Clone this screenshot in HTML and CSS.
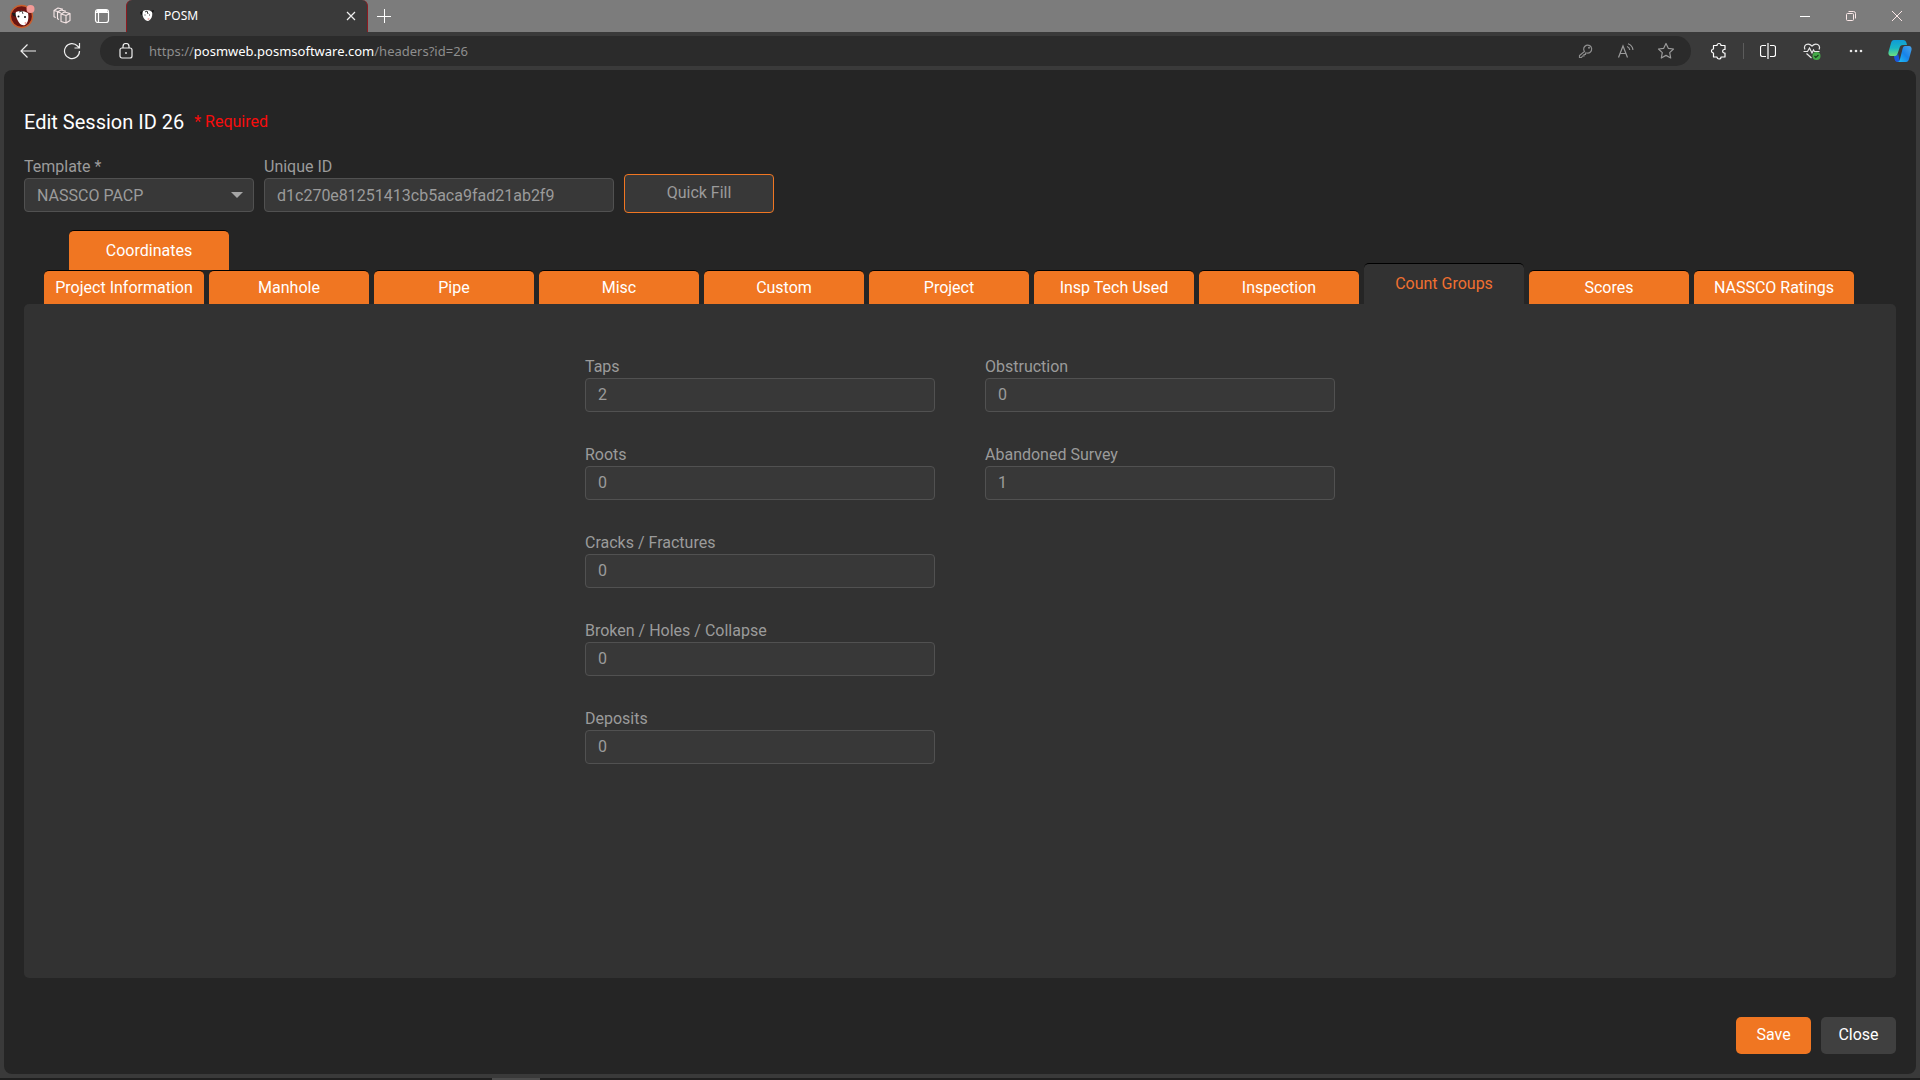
FILE: index.html
```html
<!DOCTYPE html>
<html lang="en">
<head>
<meta charset="utf-8">
<meta name="viewport" content="width=device-width, initial-scale=1">
<title>POSM</title>
<link rel="stylesheet" href="styles.css">
</head>
<body>
<div class="browser">
  <header class="titlebar">
    <button class="icon-btn" aria-label="Profile">
      <svg width="26" height="26" viewBox="0 0 26 26"><circle cx="12.500" cy="13.500" r="11" fill="#6b1512" stroke="#c9602f" stroke-width="1.300"/><path d="M3 10l5 0 1 4-5-1z" fill="#1b1b1b"/><path d="M7 9c4-2 8-1 12 1 1 5 0 10-3 12-4 1-6-2-8-6-1-3-2-5-1-7z" fill="#fff"/><circle cx="9.500" cy="13.500" r="1" fill="#111"/><circle cx="16" cy="14" r="1" fill="#111"/><path d="M10 9l3-1 1 3" stroke="#555" fill="none"/><circle cx="16.500" cy="20" r="1" fill="#f5a0a0"/><circle cx="21.500" cy="6" r="4" fill="#f39a97"/></svg>
    </button>
    <button class="icon-btn" aria-label="Workspaces">
      <svg width="18" height="18" viewBox="0 0 18 18" fill="none" stroke="#f6e6e6" stroke-width="1.100" stroke-linejoin="round"><path d="M8 7l5 1.500V16L8 14.500zM8 7l3.500-2L17 6.500 13 8.500M17 6.500v7L13 16"/><path d="M6 12.500l-1.500-.7V5L8 3l5 1.300M4.500 5L8 6M2.700 10.500L1 9.700V3.500L5 1l5 1.300M1 3.500L4.500 4.500"/></svg>
    </button>
    <button class="icon-btn" aria-label="Tab actions">
      <svg width="16" height="16" viewBox="0 0 16 16" fill="none" stroke="#fff" stroke-width="1.200"><rect x="1.500" y="1.500" width="13" height="13" rx="2.500"/><path d="M1.500 4.500h13M4.500 4.500v10"/><path d="M2.500 3h11" stroke-width="2"/></svg>
    </button>
    <div class="browser-tab">
      <svg width="16" height="14" viewBox="0 0 16 14"><path d="M1 3l3-1 1 3-3 1zM12 2l3-1-1 3z" fill="#111"/><path d="M4 2c3-2 7-1 9 1 1 4-1 8-4 9-3 0-7-5-5-10z" fill="#fff"/><path d="M6 3l2-1 1 3M5.500 6h1M10 6h1" stroke="#333" fill="none"/><circle cx="9.500" cy="10" r="1" fill="#f4b0b0"/></svg>
      <span class="browser-tab-name">POSM</span>
      <button class="tab-close" aria-label="Close tab"><svg width="10" height="10" viewBox="0 0 10 10" stroke="#eee" stroke-width="1.200"><path d="M1 1l8 8M9 1l-8 8"/></svg></button>
    </div>
    <button class="new-tab" aria-label="New tab"><svg width="14" height="14" viewBox="0 0 14 14" stroke="#fff" stroke-width="1"><path d="M0 7.500h14M7.500 0v14"/></svg></button>
    <div class="window-controls">
      <button aria-label="Minimize"><svg width="10" height="10" viewBox="0 0 10 10" stroke="#fff"><path d="M0 5.500h10"/></svg></button>
      <button aria-label="Restore"><svg width="10" height="10" viewBox="0 0 10 10" fill="none" stroke="#fbe8e8"><rect x=".5" y="2.500" width="7" height="7" rx="1"/><path d="M2.500.5h5a2 2 0 0 1 2 2v5"/></svg></button>
      <button aria-label="Close window"><svg width="10" height="10" viewBox="0 0 10 10" stroke="#fbe8e8"><path d="M0 0l10 10M10 0L0 10"/></svg></button>
    </div>
  </header>

  <div class="toolbar">
    <button class="icon-btn" aria-label="Back"><svg width="16" height="14" viewBox="0 0 16 14" fill="none" stroke="#eee" stroke-width="1.200"><path d="M16 7H1M7.500.5L1 7l6.500 6.500"/></svg></button>
    <button class="icon-btn" aria-label="Refresh"><svg width="18" height="18" viewBox="0 0 18 18" fill="none" stroke="#eee" stroke-width="1.200"><path d="M16.500 9A7.500 7.500 0 1 1 14.500 4l1.500 1.500M16.500 1v5h-5"/></svg></button>
    <div class="address">
      <svg class="lock" width="14" height="16" viewBox="0 0 14 16" fill="none" stroke="#eee" stroke-width="1.200"><rect x="1" y="5" width="12" height="10" rx="2"/><path d="M4 5V3.500a3 3 0 0 1 6 0V5"/><circle cx="7" cy="10" r=".9" fill="#eee" stroke="none"/></svg>
      <a class="url" href="#">https://<span class="host">posmweb.posmsoftware.com</span>/headers?id=26</a>
      <button class="icon-btn dim" aria-label="Saved passwords"><svg width="16" height="16" viewBox="0 0 16 16" fill="none" stroke="#8e8e8e" stroke-width="1.200"><path d="M6.500 8.500A4 4 0 1 1 9 10H7.500v1.500H6V13H4.500l-1 1.500H1.500v-2z"/><circle cx="11" cy="4.700" r="1" fill="#8e8e8e" stroke="none"/></svg></button>
      <button class="icon-btn dim" aria-label="Read aloud"><svg width="18" height="16" viewBox="0 0 18 16" fill="none" stroke="#9a9a9a" stroke-width="1.200"><path d="M1.500 14.500L6 3l4.500 11.500M3 10.500h6M10 3.500c1.500.5 2.500 1.700 2.800 3.500M11 .8c2.600.9 4.500 3 5 6"/></svg></button>
      <button class="icon-btn dim" aria-label="Add to favorites"><svg width="18" height="18" viewBox="0 0 18 18" fill="none" stroke="#9a9a9a" stroke-width="1.200" stroke-linejoin="round"><path d="M9 1.500l2.300 4.800 5.200.7-3.800 3.600 1 5.400L9 13.400 4.300 16l1-5.400L1.500 7l5.200-.7z"/></svg></button>
    </div>
    <button class="icon-btn" aria-label="Extensions"><svg width="18" height="18" viewBox="0 0 18 18" fill="none" stroke="#fff" stroke-width="1.200" stroke-linejoin="round"><path d="M3.500 3.500H7a2 2 0 0 1 4 0h4v4h-1a1.800 1.800 0 0 0 0 3.500h1v4h-4a2 2 0 0 1-4 0H3.500v-4a2 2 0 0 1 0-4z"/></svg></button>
    <span class="divider"></span>
    <button class="icon-btn" aria-label="Split screen"><svg width="16" height="16" viewBox="0 0 16 16" fill="none" stroke="#fff" stroke-width="1.200"><path d="M6 2.500H2.500a2 2 0 0 0-2 1.500v8a2 2 0 0 0 2 1.500H6M10 2.500h3.500a2 2 0 0 1 2 1.500v8a2 2 0 0 1-2 1.500H10M8 0v16"/></svg></button>
    <button class="icon-btn" aria-label="Browser essentials"><svg width="18" height="18" viewBox="0 0 18 18" fill="none" stroke="#e8e8e8" stroke-width="1.200"><path d="M2 7.500C0 3 5 0 9 4c4-4 9-1 7 3.500M.5 9.500h4l2-3.500 2.500 5 1.500-3 1 1.500h5M3.500 11.500L8.500 16"/><circle cx="13.500" cy="14" r="4" fill="#45a949" stroke="none"/><path d="M11.500 14l1.300 1.400L15.500 13" stroke="#173d19"/></svg></button>
    <button class="icon-btn" aria-label="More"><svg width="14" height="4" viewBox="0 0 14 4" fill="#e8e8e8"><circle cx="2" cy="2" r="1.300"/><circle cx="7" cy="2" r="1.300"/><circle cx="12" cy="2" r="1.300"/></svg></button>
    <button class="icon-btn" aria-label="Copilot">
      <svg width="24" height="22" viewBox="0 0 24 22"><defs><linearGradient id="ca" x1="0" y1="0" x2="0" y2="1"><stop offset="0" stop-color="#0f9bd7"/><stop offset=".5" stop-color="#19b5c5"/><stop offset="1" stop-color="#6ee07c"/></linearGradient><linearGradient id="cb" x1="1" y1="0" x2="0" y2="1"><stop offset="0" stop-color="#4ba3e8"/><stop offset=".5" stop-color="#1783ea"/><stop offset="1" stop-color="#20c5f5"/></linearGradient></defs><path d="M6 0h9c2 0 3 1 3.500 3l.5 2h-4c-2 0-3 1-3.500 3l-2 6c-.5 2-1.500 2-3 2H3c-2 0-3-2-2.500-4L3 3c.5-2 1.500-3 3-3z" fill="url(#ca)"/><path d="M6 16h1c2 0 2.500-1 3-3l2 9H9c-2 0-3-4-3-6z" fill="#1b55d8"/><path d="M17 6h4c2 0 3 2 2.500 4L21 19c-.5 2-1.500 3-3 3H9c2 0 2.500-1 3-3l2.500-10c.5-2 1-3 2.500-3z" fill="url(#cb)"/></svg>
    </button>
  </div>

  <main class="page">
    <div class="heading">
      <h1>Edit Session ID 26</h1>
      <span class="required">* Required</span>
    </div>

    <form class="session">
      <div class="session-row">
        <div class="field template">
          <label for="template">Template *</label>
          <div class="select-wrap"><select id="template"><option>NASSCO PACP</option></select></div>
        </div>
        <div class="field">
          <label for="unique">Unique ID</label>
          <input id="unique" type="text" value="d1c270e81251413cb5aca9fad21ab2f9">
        </div>
        <button type="button" class="quick-fill">Quick Fill</button>
      </div>

      <div class="tabs" role="tablist">
        <div class="tab-row upper">
          <button type="button" role="tab" class="tab tall">Coordinates</button>
        </div>
        <div class="tab-row lower">
          <button type="button" role="tab" class="tab">Project Information</button>
          <button type="button" role="tab" class="tab">Manhole</button>
          <button type="button" role="tab" class="tab">Pipe</button>
          <button type="button" role="tab" class="tab">Misc</button>
          <button type="button" role="tab" class="tab">Custom</button>
          <button type="button" role="tab" class="tab">Project</button>
          <button type="button" role="tab" class="tab">Insp Tech Used</button>
          <button type="button" role="tab" class="tab">Inspection</button>
          <button type="button" role="tab" class="tab active" aria-selected="true">Count Groups</button>
          <button type="button" role="tab" class="tab">Scores</button>
          <button type="button" role="tab" class="tab">NASSCO Ratings</button>
        </div>
      </div>

      <section class="panel" role="tabpanel">
        <div class="column">
          <div class="field"><label for="taps">Taps</label><input id="taps" type="text" value="2"></div>
          <div class="field"><label for="roots">Roots</label><input id="roots" type="text" value="0"></div>
          <div class="field"><label for="cracks">Cracks / Fractures</label><input id="cracks" type="text" value="0"></div>
          <div class="field"><label for="broken">Broken / Holes / Collapse</label><input id="broken" type="text" value="0"></div>
          <div class="field"><label for="deposits">Deposits</label><input id="deposits" type="text" value="0"></div>
        </div>
        <div class="column">
          <div class="field"><label for="obstruction">Obstruction</label><input id="obstruction" type="text" value="0"></div>
          <div class="field"><label for="abandoned">Abandoned Survey</label><input id="abandoned" type="text" value="1"></div>
        </div>
      </section>

      <div class="actions">
        <button type="button" class="action save">Save</button>
        <button type="button" class="action">Close</button>
      </div>
    </form>
  </main>
  <footer class="taskbar"><span class="task"></span></footer>
</div>
</body>
</html>
```
FILE: styles.css
```css
* { box-sizing: border-box; }

body {
  margin: 0;
  background: #3a3a3a;
  color: #fff;
  font-family: Roboto, "Liberation Sans", sans-serif;
  font-size: 16px;
  line-height: 20px;
}

button, input, select { font: inherit; color: inherit; }

button {
  margin: 0;
  padding: 0;
  border: 0;
  background: none;
}

svg { display: block; }

.browser {
  display: flex;
  flex-direction: column;
  min-height: 100vh;
}

/* Window title bar */
.titlebar {
  display: flex;
  align-items: center;
  height: 32px;
  padding-left: 2px;
  background: #7c7c7c;
}

.icon-btn {
  display: flex;
  flex: none;
  align-items: center;
  justify-content: center;
  width: 40px;
  height: 30px;
}

.browser-tab {
  display: flex;
  align-items: center;
  width: 242px;
  height: 32px;
  margin-left: 4px;
  padding: 0 11px 0 12px;
  border: solid #8d1a20;
  border-width: 0 1px;
  border-radius: 6px 6px 0 0;
  background: #3a3a3a;
}

.browser-tab-name {
  flex: 1;
  padding-left: 9px;
  font: 12px/20px "Noto Sans", "Open Sans", sans-serif;
}

.new-tab { margin-left: 9px; }

.window-controls {
  display: flex;
  margin-left: auto;
}

.window-controls button {
  display: flex;
  align-items: center;
  justify-content: center;
  width: 46px;
  height: 32px;
}

/* Address toolbar */
.toolbar {
  display: flex;
  align-items: center;
  gap: 4px;
  height: 38px;
  padding-left: 8px;
  background: #3a3a3a;
}

.address {
  display: flex;
  flex: 1;
  align-items: center;
  height: 30px;
  margin: 0 4px;
  padding: 0 5px 0 19px;
  border-radius: 15px;
  background: #2b2b2b;
}

.url {
  flex: 1;
  padding-left: 16px;
  color: #8e8e8e;
  font: 13px/20px "Noto Sans", "Open Sans", sans-serif;
  text-decoration: none;
}

.host { color: #fff; }

.divider {
  width: 1px;
  height: 16px;
  background: #5c5c5c;
}

/* Page */
.page {
  display: flex;
  flex: 1;
  flex-direction: column;
  margin: 0 4px;
  padding: 40px 20px 20px;
  border-radius: 8px;
  background: #252525;
}

.heading {
  display: flex;
  align-items: flex-start;
  gap: 10px;
  height: 47px;
}

h1 {
  margin: 0;
  font-size: 20px;
  font-weight: 400;
  line-height: 24px;
}

.required {
  color: #f80c0c;
  line-height: 24px;
}

.session {
  display: flex;
  flex: 1;
  flex-direction: column;
}

.session-row {
  display: flex;
  align-items: flex-end;
  gap: 10px;
}

.field {
  display: flex;
  flex-direction: column;
  gap: 1px;
  width: 350px;
  color: #9b9b9b;
}

.template { width: 230px; }

.field input, .field select {
  width: 100%;
  height: 34px;
  padding: 0 12px;
  border: 1px solid #515151;
  border-radius: 4px;
  background: #383838;
}

.field select {
  display: block;
  padding-top: 1px;
  appearance: none;
}

.panel input { padding-bottom: 2px; }

.select-wrap { position: relative; }

.select-wrap::after {
  content: "";
  position: absolute;
  top: 14px;
  right: 11px;
  border: solid transparent;
  border-width: 6px 6px 0;
  border-top-color: #a5a5a5;
  pointer-events: none;
}

.quick-fill {
  width: 150px;
  height: 39px;
  margin-bottom: -1px;
  padding-bottom: 2px;
  border: 1px solid #f07622;
  border-radius: 4px;
  background: #383838;
  color: #9b9b9b;
}

/* Tabs */
.tabs { margin-top: 18px; }

.tab-row {
  display: flex;
  align-items: flex-end;
  gap: 5px;
}

.upper { padding-left: 45px; }

.lower {
  margin-top: -7px;
  padding-left: 20px;
}

.tab {
  width: 160px;
  height: 34px;
  border-top: 1px solid #000;
  border-radius: 5px 5px 0 0;
  background: #f07622;
  white-space: nowrap;
}

.tall { height: 40px; }

.active {
  height: 41px;
  background: #323232;
  color: #f07030;
}

.panel {
  display: flex;
  flex: 1;
  justify-content: center;
  gap: 50px;
  padding: 53px 20px;
  border-radius: 5px;
  background: #323232;
}

.column {
  display: flex;
  flex-direction: column;
  gap: 33px;
}

/* Footer */
.actions {
  display: flex;
  justify-content: flex-end;
  gap: 10px;
  margin-top: 39px;
}

.action {
  width: 75px;
  height: 37px;
  padding-bottom: 2px;
  border-radius: 5px;
  background: #404040;
}

.save { background: #f07622; }

.taskbar {
  display: flex;
  height: 6px;
  padding-left: 492px;
  border-top: 4px solid #3a3a3a;
  background: #1f1f1f;
}

.task {
  width: 48px;
  background: #4c4c4c;
}
```
